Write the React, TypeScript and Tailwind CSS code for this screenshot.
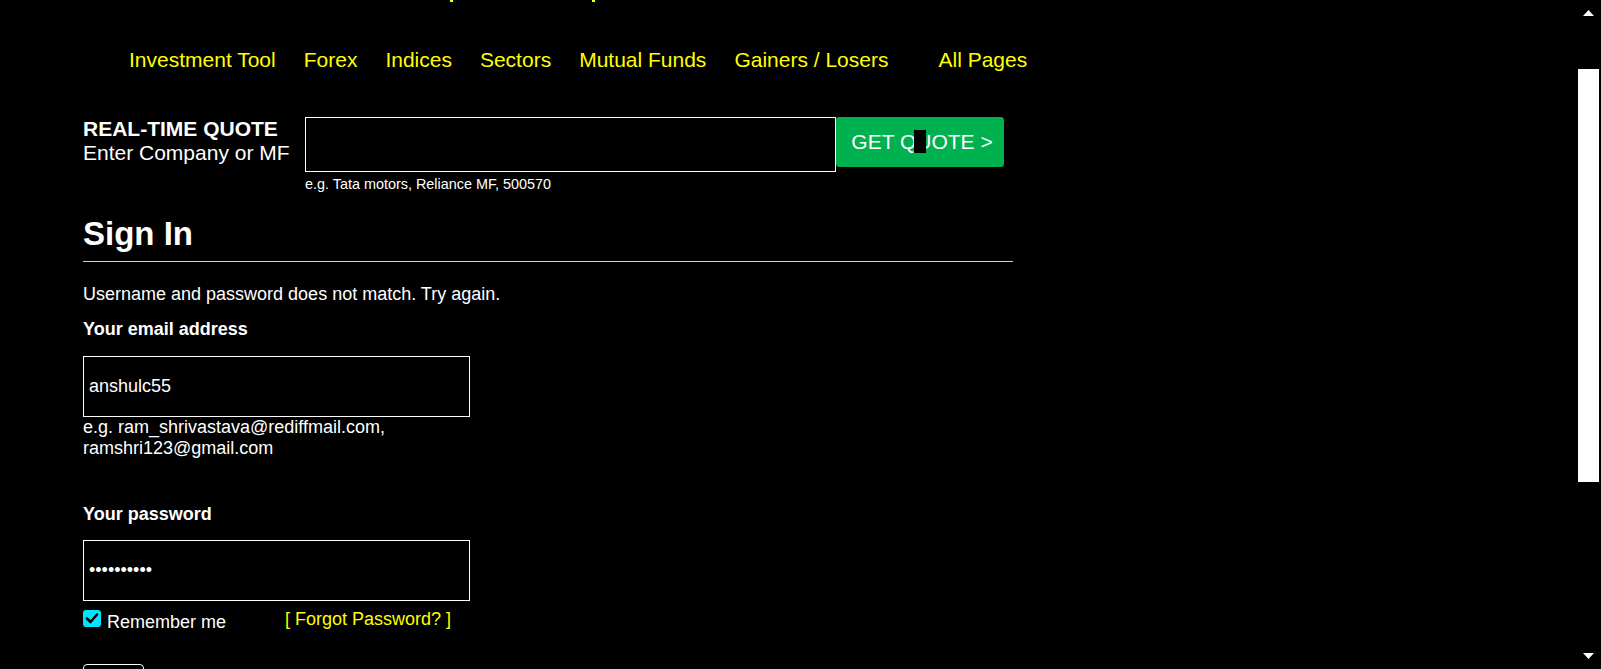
import React from 'react';

const navLinks = ['Investment Tool', 'Forex', 'Indices', 'Sectors', 'Mutual Funds', 'Gainers / Losers'];

const ScrollArrow = ({ down }: { down?: boolean }) => (
  <svg width="11" height="6" viewBox="0 0 11 6" className="ml-[5px] block">
    {down ? <polygon points="0,0 11,0 5.5,6" fill="#ffffff" /> : <polygon points="0,6 11,6 5.5,0" fill="#ffffff" />}
  </svg>
);

const App = () => {
  return (
    <div className="flex h-[669px] w-full overflow-hidden bg-black font-['Liberation_Sans',Arial,sans-serif] text-white">
      <main className="min-w-0 flex-1">
        {/* bits of the header line that is scrolled away */}
        <div className="flex h-[2px]">
          <span className="ml-[450px] h-[2px] w-[3px] bg-[#ffff00]" />
          <span className="ml-[139px] h-[2px] w-[3px] bg-[#ffff00]" />
        </div>

        <nav className="mt-[46px] flex pl-[129px] text-[21px] leading-[24px] text-[#ffff00]">
          <div className="flex gap-[28px]">
            {navLinks.map((link) => (
              <a key={link} href="#" className="whitespace-nowrap">
                {link}
              </a>
            ))}
          </div>
          <a href="#" className="ml-[50px] whitespace-nowrap">
            All Pages
          </a>
        </nav>

        <div className="mt-[45px] flex items-start pl-[83px]">
          <div className="w-[222px] text-[21px] leading-[24px]">
            <p className="font-bold">REAL-TIME QUOTE</p>
            <p>Enter Company or MF</p>
          </div>
          <div className="flex flex-col">
            <input type="text" className="h-[55px] w-[531px] border border-white bg-black px-[5px] text-[18px] text-white outline-none" />
            <p className="mt-[4px] text-[14.4px] leading-[16px]">e.g. Tata motors, Reliance MF, 500570</p>
          </div>
          <button className="relative h-[50px] w-[168px] rounded-[3px] bg-[#00b14f] pl-[4px] text-[21px] text-white">
            GET QUOTE &gt;
            <span className="absolute left-[78px] top-[13px] h-[23px] w-[12px] bg-black" />
          </button>
        </div>

        <section className="pl-[83px]">
          <h1 className="mt-[23px] text-[33px] font-bold leading-[38px]">Sign In</h1>
          <hr className="mt-[8px] w-[930px] border-0 border-t border-[#d4d4d4]" />

          <p className="mt-[22px] text-[18px] leading-[21px]">Username and password does not match. Try again.</p>

          <label className="mt-[14px] block text-[18px] font-bold leading-[21px]">Your email address</label>
          <input
            type="text"
            defaultValue="anshulc55"
            className="mt-[16px] block h-[61px] w-[387px] border border-white bg-black px-[5px] text-[18px] text-white outline-none"
          />
          <p className="text-[18px] leading-[21px]">
            e.g. ram_shrivastava@rediffmail.com,
            <br />
            ramshri123@gmail.com
          </p>

          <label className="mt-[45px] block text-[18px] font-bold leading-[21px]">Your password</label>
          <input
            type="password"
            defaultValue="anshul1234"
            className="mt-[15px] block h-[61px] w-[387px] border border-white bg-black px-[5px] text-[18px] text-white outline-none"
          />

          <div className="mt-[9px] flex items-start text-[18px] leading-[21px]">
            <div className="flex w-[202px] items-start">
              <label className="relative block h-[17px] w-[18px]">
                <input type="checkbox" defaultChecked className="block h-[17px] w-[18px] appearance-none rounded-[3px] bg-[#00e5ff]" />
                <svg viewBox="0 0 18 17" className="pointer-events-none absolute left-0 top-0 h-[17px] w-[18px]">
                  <path d="M4 8.5 L7.5 12 L14 4.5" fill="none" stroke="#000000" strokeWidth="2.6" strokeLinecap="round" strokeLinejoin="round" />
                </svg>
              </label>
              <span className="ml-[6px] mt-[2px]">Remember me</span>
            </div>
            <a href="#" className="-mt-[1px] text-[#ffff00]">
              [ Forgot Password? ]
            </a>
          </div>

          <button className="mt-[31px] h-[36px] w-[61px] rounded-[4px] border border-white text-[16px]">Sign In</button>
        </section>
      </main>

      <div className="flex w-[23px] flex-col pt-[10px] pb-[10px]">
        <ScrollArrow />
        <div className="mt-[53px] h-[413px] w-[21px] bg-white" />
        <div className="flex-1" />
        <ScrollArrow down />
      </div>
    </div>
  );
};

export default App;
